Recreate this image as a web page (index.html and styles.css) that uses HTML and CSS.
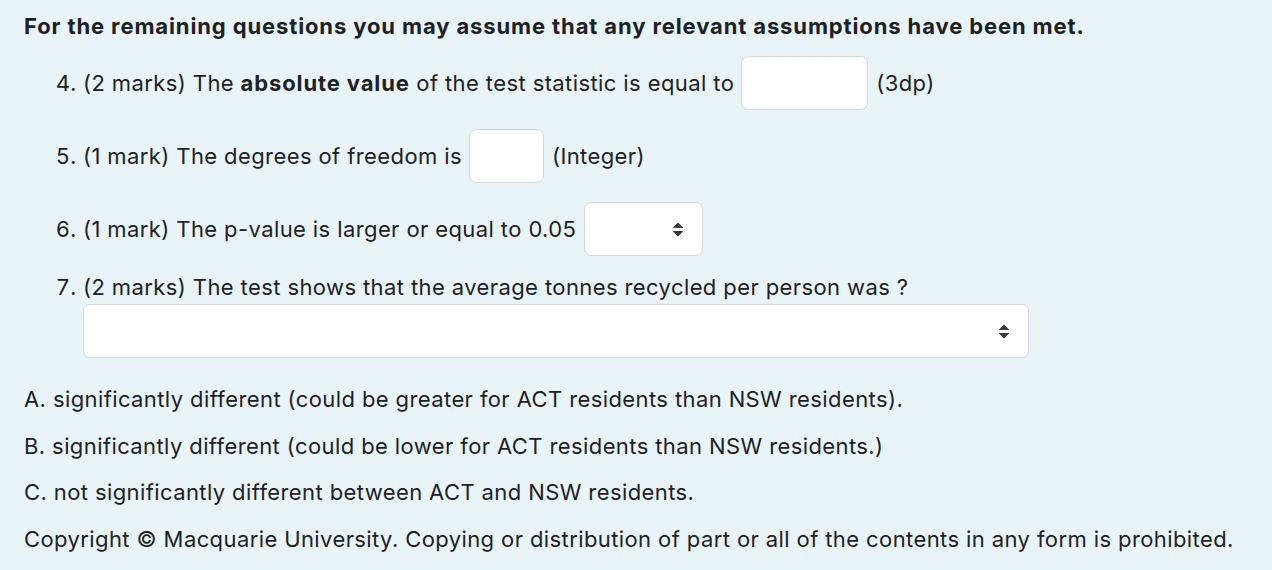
FILE: index.html
```html
<!DOCTYPE html>
<html lang="en">
<head>
<meta charset="utf-8">
<title>Questions</title>
<link rel="stylesheet" href="styles.css">
</head>
<body>
<div class="page">
  <p class="lead"><strong>For the remaining questions you may assume that any relevant assumptions have been met.</strong></p>
  <ol class="questions" start="4">
    <li class="q q4">
      <div class="row">
        <span>(2 marks) The <strong>absolute value</strong> of the test statistic is equal to</span>
        <input class="field field-wide" type="text" aria-label="test statistic">
        <span>(3dp)</span>
      </div>
    </li>
    <li class="q q5">
      <div class="row">
        <span>(1 mark) The degrees of freedom is</span>
        <input class="field field-narrow" type="text" aria-label="degrees of freedom">
        <span>(Integer)</span>
      </div>
    </li>
    <li class="q q6">
      <div class="row">
        <span>(1 mark) The p-value is larger or equal to 0.05</span>
        <div class="select select-short" role="combobox" aria-label="p-value choice">
          <svg class="arrows" width="12" height="15" viewBox="0 0 12 15" aria-hidden="true"><path d="M6 0.5 L11.5 6 L0.5 6 Z M6 14.5 L11.5 9 L0.5 9 Z" fill="#343a40"/></svg>
        </div>
      </div>
    </li>
    <li class="q q7">
      <p class="q-text">(2 marks) The test shows that the average tonnes recycled per person was ?</p>
      <div class="select select-long" role="combobox" aria-label="test conclusion">
        <svg class="arrows" width="12" height="15" viewBox="0 0 12 15" aria-hidden="true"><path d="M6 0.5 L11.5 6 L0.5 6 Z M6 14.5 L11.5 9 L0.5 9 Z" fill="#343a40"/></svg>
      </div>
    </li>
  </ol>
  <div class="options">
    <p>A. significantly different (could be greater for ACT residents than NSW residents).</p>
    <p>B. significantly different (could be lower for ACT residents than NSW residents.)</p>
    <p>C. not significantly different between ACT and NSW residents.</p>
    <p>Copyright © Macquarie University. Copying or distribution of part or all of the contents in any form is prohibited.</p>
  </div>
</div>
</body>
</html>
```

FILE: styles.css
```css
html, body {
  margin: 0;
  padding: 0;
  background: #e8f4f7;
}
body {
  font-family: Inter, "Liberation Sans", Arial, sans-serif;
  font-size: 22px;
  line-height: 33px;
  letter-spacing: 0.4px;
  color: #1d2125;
}
strong {
  font-weight: 700;
  letter-spacing: 0.88px;
}
.page {
  padding: 10px 24px 0 24px;
}
.lead {
  margin: 0;
}
.questions {
  margin: 13px 0 0 0;
  padding: 0 0 0 59px;
}
.q {
  margin: 0;
}
.q4 { margin-bottom: 19px; }
.q5 { margin-bottom: 19px; }
.q6 { margin-bottom: 15px; }
.row {
  display: flex;
  align-items: center;
  gap: 7px;
  height: 54px;
}
.field {
  box-sizing: border-box;
  height: 54px;
  border: 1px solid #d3d9de;
  border-radius: 7px;
  background: #ffffff;
  font: inherit;
  padding: 0 12px;
  margin-right: 1px;
}
.field-wide { width: 127px; }
.field-narrow { width: 75px; }
.select {
  box-sizing: border-box;
  height: 54px;
  border: 1px solid #d3d9de;
  border-radius: 7px;
  background: #ffffff;
  display: flex;
  align-items: center;
  justify-content: flex-end;
  padding-right: 18px;
}
.select-short { width: 119px; margin-left: 1px; }
.select-long { width: 946px; }
.q-text {
  margin: 0;
}
.options {
  margin-top: 18px;
}
.options p {
  margin: 0;
  line-height: 46.5px;
}
```
